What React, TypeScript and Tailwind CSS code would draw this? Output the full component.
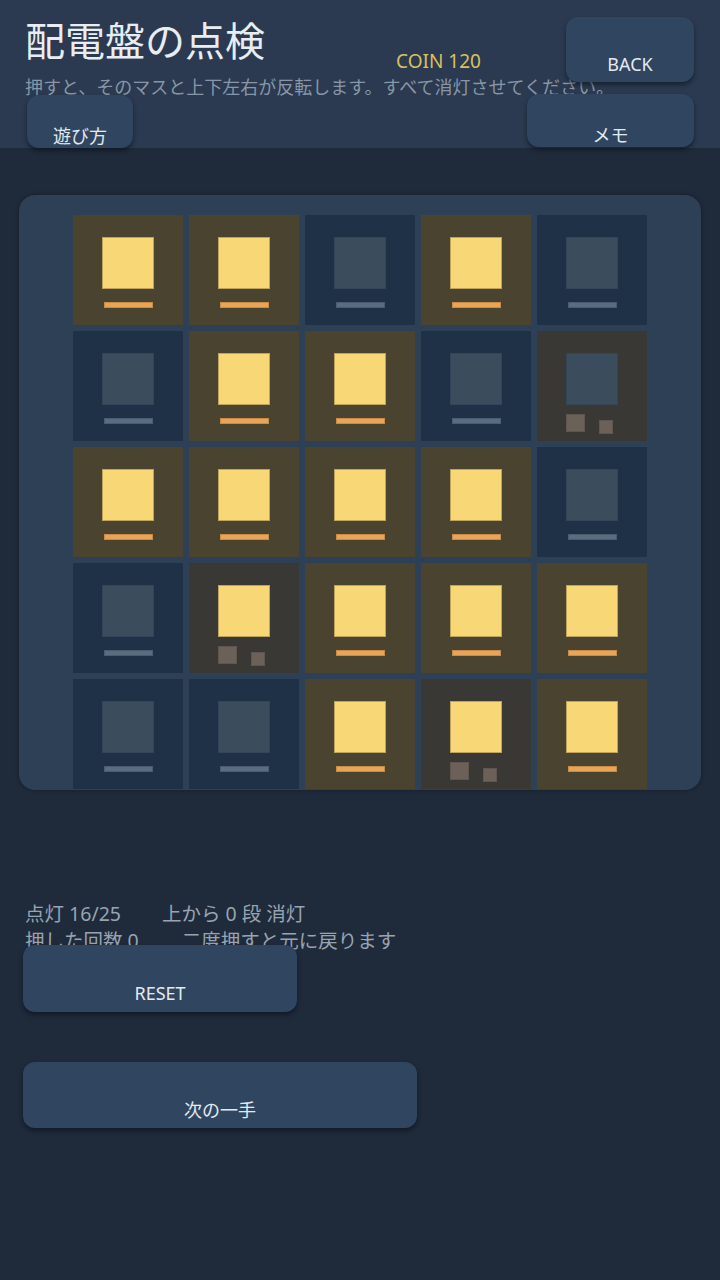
import React from "react";

type Cell = { lit: boolean; broken?: boolean };

const L: Cell = { lit: true };
const D: Cell = { lit: false };
const BL: Cell = { lit: true, broken: true };
const BD: Cell = { lit: false, broken: true };

const grid: Cell[][] = [
  [L, L, D, L, D],
  [D, L, L, D, BD],
  [L, L, L, L, D],
  [D, BL, L, L, L],
  [D, D, L, BL, L],
];

function Tile({ cell }: { cell: Cell }) {
  const bg = cell.broken ? "bg-[#3a3835]" : cell.lit ? "bg-[#4a4330]" : "bg-[#1f3146]";
  return (
    <div className={`w-[110px] h-[110px] ${bg} flex flex-col items-center pt-[22px]`}>
      <div
        className={
          cell.lit
            ? "w-[52px] h-[52px] bg-[#f7d776] border border-[#bfa35e]"
            : "w-[52px] h-[52px] bg-[#3b4c5d] border border-[#34455a]"
        }
      />
      {cell.broken ? (
        <div className="w-[52px] flex flex-row items-start mt-[9px]">
          <div className="w-[19px] h-[18px] bg-[#6b6158] border border-[#5f564f]" />
          <div className="w-[14px] h-[14px] ml-[14px] mt-[6px] bg-[#6b6158] border border-[#5f564f]" />
        </div>
      ) : (
        <div
          className={
            cell.lit
              ? "w-[49px] h-[6px] mt-[13px] bg-[#e8a558] border border-[#c98c48]"
              : "w-[49px] h-[6px] mt-[13px] bg-[#5a6d80] border border-[#4b5c6e]"
          }
        />
      )}
    </div>
  );
}

const btn =
  "relative bg-[#2f4560] rounded-[12px] shadow-[0_3px_4px_rgba(10,15,25,0.55)] text-[#e4e9ef] text-[18px] leading-[18px] flex items-end justify-center";

export default function App() {
  return (
    <div
      className="w-[720px] h-[1280px] bg-[#1f2a3b] overflow-hidden"
      style={{ fontFamily: '"Noto Sans", "Noto Sans CJK JP", sans-serif' }}
    >
      {/* header */}
      <div className="h-[148px] bg-[#2b3a50] pl-[25px] pr-[26px] pt-[17px]">
        <div className="flex items-start">
          <h1 className="text-[40px] leading-[48px] text-[#e8edf2] font-normal whitespace-nowrap">
            配電盤の点検
          </h1>
          <div className="ml-[131px] mt-[35px] text-[19px] leading-[19px] text-[#d9c05e] whitespace-nowrap">
            COIN 120
          </div>
          <button className={`${btn} ml-auto w-[128px] h-[65px] pb-[9px]`}>BACK</button>
        </div>
        <p className="-mt-[4px] text-[18px] leading-[18px] text-[#8896a7] whitespace-nowrap">
          押すと、そのマスと上下左右が反転します。すべて消灯させてください。
        </p>
        <div className="flex items-start justify-between -mt-[2px]">
          <button className={`${btn} ml-[2px] mt-[1px] w-[106px] h-[53px] pb-[3px]`}>遊び方</button>
          <button className={`${btn} w-[167px] h-[53px] pb-[3px]`}>メモ</button>
        </div>
      </div>

      {/* board */}
      <div className="mx-[19px] mt-[47px] h-[595px] rounded-[16px] bg-[#2e4056] shadow-[0_0_4px_rgba(0,0,0,0.35)] overflow-hidden pt-[20px]">
        <div className="grid grid-cols-[repeat(5,110px)] gap-[6px] justify-center">
          {grid.flatMap((row, r) => row.map((c, i) => <Tile key={`${r}-${i}`} cell={c} />))}
        </div>
      </div>

      {/* status */}
      <div className="mt-[110px] pl-[25px] text-[19.5px] leading-[27px] text-[#98a4b2] whitespace-nowrap">
        <div className="h-[27px]">
          <span>点灯 16/25</span>
          <span className="ml-[41px]">上から 0 段 消灯</span>
        </div>
        <div className="h-[27px]">
          <span>押した回数 0</span>
          <span className="ml-[43px]">二度押すと元に戻ります</span>
        </div>
      </div>

      <div className="pl-[23px] flex flex-col items-start">
        <button className={`${btn} -mt-[9px] w-[274px] h-[67px] pb-[10px]`}>RESET</button>
        <button className={`${btn} mt-[50px] w-[394px] h-[66px] pb-[9px]`}>次の一手</button>
      </div>
    </div>
  );
}
